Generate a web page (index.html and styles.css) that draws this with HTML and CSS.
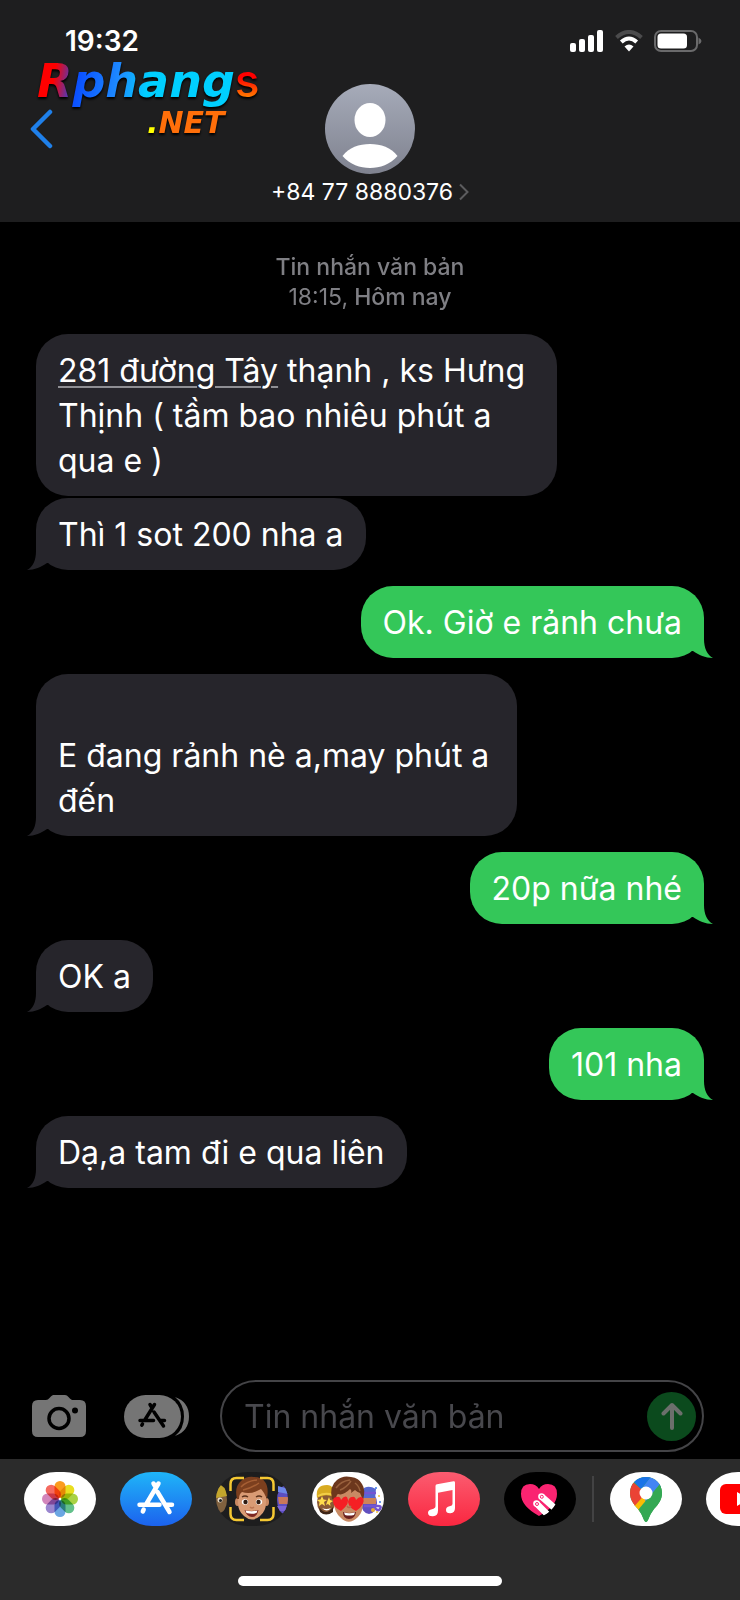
FILE: index.html
```html
<!DOCTYPE html>
<html lang="vi">
  <head>
    <meta charset="UTF-8" />
    <meta name="viewport" content="width=device-width, initial-scale=1.0" />
    <title>+84 77 8880376</title>
    <link rel="stylesheet" href="styles.css">
  </head>
  <body>
    <header class="header">
      <div class="status-bar">
        <span class="time">19:32</span>
        <div class="status-icons">
          <svg width="34" height="22" viewBox="0 0 34 22" fill="#fff">
            <rect x="0" y="13" width="6" height="9" rx="2" />
            <rect x="9" y="9" width="6" height="13" rx="2" />
            <rect x="18" y="5" width="6" height="17" rx="2" />
            <rect x="27" y="0" width="6" height="22" rx="2" />
          </svg>
          <svg width="28" height="22" viewBox="0 0 28 22" fill="none">
            <path d="M1.5 7.5Q14-3.5 26.5 7.5" stroke="#4b4b4c" stroke-width="4" />
            <path d="M6.3 12Q14 5 21.7 12" stroke="#fff" stroke-width="4" />
            <path d="M9.5 16.5Q14 12.500 18.500 16.500L14 21.500Z" fill="#fff" />
          </svg>
          <svg width="48" height="22" viewBox="0 0 48 22" fill="none">
            <rect x="1" y="1" width="42" height="20" rx="6" stroke="#6a6a6b" stroke-width="2" />
            <rect x="3.500" y="3.500" width="29.500" height="15" rx="3.500" fill="#fff" />
            <path d="M44.500 7.500Q47.500 9 47.500 11T44.500 14.500Z" fill="#6a6a6b" />
          </svg>
        </div>
      </div>
      <nav class="nav">
        <button class="back" aria-label="Quay lại">
          <svg width="24" height="40" viewBox="0 0 24 40" fill="none" stroke="#1f80ea" stroke-width="4.500" stroke-linecap="round" stroke-linejoin="round">
            <path d="M20 3L3 20L20 37" />
          </svg>
        </button>
        <a class="contact" href="#">
          <svg class="avatar" viewBox="0 0 90 90">
            <defs>
              <linearGradient id="avatar-bg" x1="0" y1="0" x2="0" y2="1">
                <stop offset="0" stop-color="#a6abb9" />
                <stop offset="1" stop-color="#7f828f" />
              </linearGradient>
            </defs>
            <circle cx="45" cy="45" r="45" fill="url(#avatar-bg)" />
            <ellipse cx="45" cy="36" rx="15.500" ry="17" fill="#fff" />
            <path d="M17.500 72C24 63.500 34 60 45 60S66 63.500 72.500 72C65 80.500 55 84 45 84S25 80.500 17.500 72Z" fill="#fff" />
          </svg>
          <span class="number">+84 77 8880376
            <svg width="10" height="18" viewBox="0 0 10 18" fill="none" stroke="#5c5c5e" stroke-width="2">
              <path d="M1 1.500L8.500 9L1 16.500" />
            </svg>
          </span>
        </a>
      </nav>
      <div class="logo">
        <div class="logo-top"><span class="logo-name">Rphang</span><span class="logo-s">s</span></div>
        <div class="logo-net"><span class="logo-dot">.</span>NET</div>
      </div>
    </header>

    <main class="messages">
      <div class="stamp">Tin nhắn văn bản<br><time>18:15,</time> Hôm nay</div>
      <div class="message"><a href="#">281 đường Tây</a> thạnh , ks Hưng Thịnh ( tầm bao nhiêu phút a qua e )</div>
      <div class="message tail follow">Thì 1 sot 200 nha a</div>
      <div class="message tail user">Ok. Giờ e rảnh chưa</div>
      <div class="message tail narrow"><br>E đang rảnh nè a,may phút a đến</div>
      <div class="message tail user">20p nữa nhé</div>
      <div class="message tail">OK a</div>
      <div class="message tail user">101 nha</div>
      <div class="message tail">Dạ,a tam đi e qua liên</div>
    </main>

    <form class="input-area">
      <button type="button" aria-label="Máy ảnh">
        <svg width="54" height="42" viewBox="0 0 54 42">
          <path d="M6 5H14Q16 5 17.500 3T21 0H33Q35 0 36.500 2T40 5H48Q54 5 54 11V36Q54 42 48 42H6Q0 42 0 36V11Q0 5 6 5Z" fill="#757575" />
          <circle cx="27" cy="23.500" r="10" fill="none" stroke="#000" stroke-width="3.500" />
          <circle cx="43" cy="15.500" r="3" fill="#000" />
        </svg>
      </button>
      <button type="button" aria-label="Ứng dụng">
        <svg width="66" height="43" viewBox="0 0 66 43">
          <path d="M51 2Q65 7 65 21.500T51 41Q60 34 60 21.500T51 2Z" fill="#757575" />
          <rect x="0" y="0" width="57" height="43" rx="21.500" fill="#757575" />
          <g stroke="#000" stroke-width="3.500" stroke-linecap="round" fill="none">
            <path d="M30.500 9.500L20.500 25.500M18.500 29L17.800 30.200M26 9.500L27.500 12M30 17L39.500 31M16 25.500H29.500M36.500 25.500H40.500" />
          </g>
        </svg>
      </button>
      <div class="field">
        <input type="text" placeholder="Tin nhắn văn bản" aria-label="Tin nhắn văn bản" />
        <button class="send" aria-label="Gửi">
          <svg width="22" height="28" viewBox="0 0 22 28" fill="none" stroke="#6c6f6c" stroke-width="4" stroke-linecap="round" stroke-linejoin="round">
            <path d="M11 26V3M2.500 11.500L11 3L19.500 11.500" />
          </svg>
        </button>
      </div>
    </form>

    <footer class="tray">
      <div class="apps">
        <button class="app" aria-label="Ảnh">
          <svg viewBox="0 0 72 54">
            <rect width="72" height="54" fill="#fff" />
            <g class="petals" transform="translate(36 27)">
              <rect x="-5.500" y="-18" width="11" height="17" rx="5.500" fill="#fb9c1e" />
              <rect x="-5.500" y="-18" width="11" height="17" rx="5.500" fill="#e9de20" transform="rotate(45)" />
              <rect x="-5.500" y="-18" width="11" height="17" rx="5.500" fill="#a9d244" transform="rotate(90)" />
              <rect x="-5.500" y="-18" width="11" height="17" rx="5.500" fill="#63c08b" transform="rotate(135)" />
              <rect x="-5.500" y="-18" width="11" height="17" rx="5.500" fill="#6ba6e2" transform="rotate(180)" />
              <rect x="-5.500" y="-18" width="11" height="17" rx="5.500" fill="#9a86cf" transform="rotate(225)" />
              <rect x="-5.500" y="-18" width="11" height="17" rx="5.500" fill="#d286bb" transform="rotate(270)" />
              <rect x="-5.500" y="-18" width="11" height="17" rx="5.500" fill="#f56a60" transform="rotate(315)" />
              <circle r="1.200" fill="#fff" />
            </g>
          </svg>
        </button>
        <button class="app" aria-label="App Store">
          <svg viewBox="0 0 72 54">
            <defs>
              <linearGradient id="store-bg" x1="0" y1="0" x2="0" y2="1">
                <stop offset="0" stop-color="#1fb5f8" />
                <stop offset="1" stop-color="#1c62ee" />
              </linearGradient>
            </defs>
            <rect width="72" height="54" fill="url(#store-bg)" />
            <path d="M38.500 11.500L26 32.500M23.700 37.500L22.800 39.500M33.500 11.500L35 14M37.500 20L49.500 40M19.500 32.800H39.500M47 32.800H52" stroke="#fff" stroke-width="4.500" stroke-linecap="round" fill="none" />
          </svg>
        </button>
        <button class="app" aria-label="Memoji">
          <svg viewBox="0 0 72 54">
            <rect width="72" height="54" fill="#1d1d1e" />
            <!-- left and right heads, cut off by the pill -->
            <ellipse cx="3" cy="28" rx="8" ry="13" fill="#80613f" />
            <path d="M0 13Q9 11 11 24L0 26Z" fill="#c3a62c" />
            <circle cx="4" cy="28" r="2.500" fill="#e9dfcd" />
            <circle cx="4.500" cy="28.500" r="1.500" fill="#222" />
            <ellipse cx="69" cy="28" rx="8" ry="14" fill="#5c4ec0" />
            <path d="M62 25H72V32H63Z" fill="#c9785a" />
            <path d="M62 14L72 17V22L62 20Z" fill="#6d87e6" />
            <path d="M61 34H72V39H64Z" fill="#7c64d8" />
            <!-- face -->
            <ellipse cx="21.500" cy="30" rx="2.500" ry="4" fill="#c98862" />
            <ellipse cx="50.500" cy="30" rx="2.500" ry="4" fill="#c98862" />
            <path d="M22 20Q22 13 36 13T50 20V31Q50 39 44 44Q36 51 28 44Q22 39 22 31Z" fill="#d99b74" />
            <path d="M21 27Q18 15 25 9Q30 4 38 5Q46 5 49 10Q53 15 51 27L48 21Q46 18 45 17Q35 23 26 20Q23 22 23 27Z" fill="#7c3f1e" />
            <path d="M25 15Q31 9 41 8M27 18Q36 16 43 11" stroke="#a65f34" stroke-width="1.500" fill="none" />
            <path d="M26 25Q29 23 32 25M40 25Q43 23 46 25" stroke="#59301a" stroke-width="1.500" fill="none" />
            <ellipse cx="29" cy="30" rx="3.200" ry="2.700" fill="#fff" />
            <ellipse cx="43" cy="30" rx="3.200" ry="2.700" fill="#fff" />
            <circle cx="29.500" cy="30" r="2.200" fill="#2e1b12" />
            <circle cx="42.500" cy="30" r="2.200" fill="#2e1b12" />
            <path d="M34 35Q36 37 38 35" stroke="#bb7551" stroke-width="1.500" fill="none" />
            <path d="M28.500 38Q36 40 42.500 38Q41 45 36 45T28.500 38Z" fill="#7c2622" />
            <path d="M29.500 38.400Q36 40 41.500 38.400L40.500 41Q36 42.500 30.500 41Z" fill="#fff" />
            <path d="M14.500 19V12Q14.500 6 20.500 6H28M44 6H51.500Q57.500 6 57.500 12V19M14.500 35V42Q14.500 48 20.500 48H28M44 48H51.500Q57.500 48 57.500 42V35" stroke="#f5c832" stroke-width="2.500" fill="none" />
          </svg>
        </button>
        <button class="app" aria-label="Nhãn dán Memoji">
          <svg viewBox="0 0 72 54">
            <rect width="72" height="54" fill="#fff" />
            <!-- bearded head with star eyes -->
            <ellipse cx="14" cy="30" rx="9" ry="12" fill="#8b5a35" />
            <path d="M5 26Q3 13 15 13Q23 13 22 25Q13 21 5 26Z" fill="#d8ab21" />
            <path d="M6 24Q13 20 21 23" stroke="#f2ce47" stroke-width="2" fill="none" />
            <path d="M10 24L11.500 27.500L15 28L12 30L13 34L10 32L7 34L7.500 30L5 28L8.500 27.500Z" fill="#ffdd4d" />
            <path d="M17 25L18 28L21 29L18 31L18.500 34L16 32L14 33L15 30Z" fill="#ffdd4d" />
            <path d="M7 35Q14 45 21 35V40Q14 45 8 40Z" fill="#3e2618" />
            <path d="M10 36Q14 38 19 36Q15 41 10 36Z" fill="#fff" />
            <!-- party head -->
            <ellipse cx="57" cy="31" rx="8" ry="11" fill="#6150bf" />
            <path d="M50 18Q55 12 64 17L63 26H51Z" fill="#5768d0" />
            <path d="M51 26H64V32H51Z" fill="#cf8458" />
            <path d="M51 21H64M52 34H66Q70 34 68 37T62 35" stroke="#7455d1" stroke-width="2.500" fill="none" />
            <circle cx="61" cy="38" r="2" fill="#e9ad31" />
            <circle cx="64" cy="16" r="1" fill="#3978e8" />
            <circle cx="67" cy="24" r="1" fill="#f1c53a" />
            <circle cx="65" cy="40" r="1" fill="#f1c53a" />
            <circle cx="68" cy="30" r="1" fill="#3978e8" />
            <!-- heart eyes -->
            <path d="M22 18Q24 12 36 12T51 20V31Q51 40 46 45Q37 54 29 46Q22 40 22 31Z" fill="#c98a63" />
            <path d="M20 27Q17 14 25 8Q31 3 39 5Q47 6 50 12Q54 18 51 28L48 21Q45 20 43 18L39 21Q40 18 38 17Q31 24 26 22Q24 23 24 28Z" fill="#6c371d" />
            <path d="M24 16Q29 9 38 8M28 18Q34 16 39 9M43 11Q47 14 48 19" stroke="#98603c" stroke-width="1.500" fill="none" />
            <path d="M29 39Q21 35 21 29Q21 25 25 25Q28 24 29 28Q32 23 35 25Q39 31 29 39Z" fill="#f51f24" />
            <path d="M44 39Q37 36 36 30Q37 25 40 25Q43 24 44 28Q48 23 51 26Q54 32 44 39Z" fill="#f51f24" />
            <path d="M35 34Q37 37 39 34" stroke="#b36f4c" stroke-width="1.500" fill="none" />
            <path d="M31 40Q37 42 44 40Q43 47 37 47T31 40Z" fill="#6b201f" />
            <path d="M32 40.500Q37 42 43 40.500L42 43Q37 44 33 43Z" fill="#fff" />
          </svg>
        </button>
        <button class="app" aria-label="Nhạc">
          <svg viewBox="0 0 72 54">
            <defs>
              <linearGradient id="music-bg" x1="0" y1="0" x2="0" y2="1">
                <stop offset="0" stop-color="#fb5c70" />
                <stop offset="1" stop-color="#fa2740" />
              </linearGradient>
            </defs>
            <rect width="72" height="54" fill="url(#music-bg)" />
            <path d="M27.500 14Q27.500 12.500 29 12.200L45.500 9.200Q47 9 47 10.500V36Q47 41 42.500 41.300Q38 41.500 38 38Q38 35 41.500 34.300Q44.500 33.800 44.500 32V18L30 20.700V38.500Q30 44 25 44.300Q20 44.500 20 40.800Q20 37.800 24 37.200Q27.500 36.600 27.500 34Z" fill="#fff" />
          </svg>
        </button>
        <button class="app" aria-label="Digital Touch">
          <svg viewBox="0 0 72 54">
            <rect width="72" height="54" fill="#000" />
            <path d="M35 44Q17 34 17 22Q17 12 26 12Q32 12 35 17Q38 12 44 12Q53 12 53 22Q53 34 35 44Z" fill="#fa2471" />
            <path d="M37.500 24.500L50 35.500M32.500 31.500L43 42" stroke="#fff" stroke-width="6.500" />
            <circle cx="37.500" cy="24.500" r="3.300" fill="#fff" />
            <circle cx="32.500" cy="31.500" r="3.300" fill="#fff" />
            <circle cx="37.800" cy="24.800" r="1.500" fill="none" stroke="#fa2471" />
            <circle cx="33" cy="32" r="1.500" fill="none" stroke="#fa2471" />
            <path d="M53 29V46H35L44 41Q51 35 53 29Z" fill="#000" />
          </svg>
        </button>
        <span class="divider"></span>
        <button class="app" aria-label="Google Maps">
          <svg viewBox="0 0 72 54">
            <defs>
              <clipPath id="pin">
                <path d="M36 5C26.500 5 20 12 20 21C20 28 23.500 32 28 37Q32 42 34 48Q36 52 38 48Q40 42 44 37C48.500 32 52 28 52 21C52 12 45.500 5 36 5Z" />
              </clipPath>
            </defs>
            <rect width="72" height="54" fill="#fff" />
            <g clip-path="url(#pin)">
              <rect x="18" y="3" width="36" height="50" fill="#34a853" />
              <path d="M18 38L40 12L44 24L28 41Z" fill="#fbbc04" />
              <path d="M18 6L36 21L22 37L16 30Z" fill="#ea4335" />
              <path d="M30 3H56V9L36 31L32 16L42 3Z" fill="#4285f4" />
              <path d="M22 8L28 2H43L31 17Z" fill="#1a73e8" />
              <path d="M54 7L28 38L34 52L56 40Z" fill="#34a853" />
            </g>
            <circle cx="36" cy="21" r="6.500" fill="#fff" />
          </svg>
        </button>
        <button class="app" aria-label="YouTube">
          <svg viewBox="0 0 72 54">
            <rect width="72" height="54" fill="#fff" />
            <rect x="14" y="12" width="44" height="30" rx="6" fill="#f00" />
            <path d="M31 20L43 27L31 34Z" fill="#fff" />
          </svg>
        </button>
      </div>
      <div class="home-bar"></div>
    </footer>
  </body>
</html>
```
FILE: styles.css
```css
* {
  margin: 0;
  padding: 0;
  box-sizing: border-box;
}
body {
  min-height: 100vh;
  display: flex;
  flex-direction: column;
  font-family: Inter, "Liberation Sans", sans-serif;
  background: #000;
  color: #fff;
  overflow-x: hidden;
}
button {
  border: none;
  background: none;
  cursor: pointer;
}
a {
  color: inherit;
}
svg {
  display: block;
}

/* header */
.header {
  position: relative;
  background: #1e1e1f;
  padding-bottom: 15px;
}
.status-bar {
  display: flex;
  justify-content: space-between;
  align-items: center;
  height: 84px;
  padding: 0 38px 2px 65px;
}
.time {
  font-size: 28px;
  font-weight: 600;
}
.status-icons {
  display: flex;
  gap: 11px;
}
.nav {
  display: grid;
  grid-template-columns: 1fr auto 1fr;
  align-items: start;
}
.back {
  justify-self: start;
  padding: 25px 30px;
}
.contact {
  display: flex;
  flex-direction: column;
  align-items: center;
  gap: 3px;
  text-decoration: none;
}
.avatar {
  width: 90px;
  height: 90px;
}
.number {
  display: flex;
  align-items: center;
  gap: 6px;
  font-size: 23px;
  line-height: 30px;
}
.logo {
  position: absolute;
  top: 54px;
  left: 37px;
  font-family: "DejaVu Sans", sans-serif;
  font-weight: bold;
  font-style: italic;
  filter: drop-shadow(0 2px 1px #000);
}
.logo-top {
  font-size: 46px;
  line-height: 52px;
}
.logo-name {
  background: linear-gradient(100deg, #f00 10%, #0a50ff 22%, #1e8cff 42%, #00cfff 56%);
  -webkit-background-clip: text;
  background-clip: text;
  color: transparent;
}
.logo-s {
  font-family: Inter, sans-serif;
  font-weight: 500;
  font-style: normal;
  background: linear-gradient(#f00 45%, #ff7a00 80%);
  -webkit-background-clip: text;
  background-clip: text;
  color: transparent;
}
.logo-net {
  padding-left: 110px;
  font-size: 30px;
  line-height: 32px;
  color: #ff6f0a;
}
.logo-dot {
  color: #ff0;
}

/* conversation */
.messages {
  flex: 1;
  display: flex;
  flex-direction: column;
  align-items: flex-start;
  gap: 16px;
  padding: 30px 36px 16px;
}
.stamp {
  align-self: center;
  margin-bottom: 6px;
  font-size: 23px;
  font-weight: 500;
  line-height: 30px;
  text-align: center;
  color: #7f7f84;
}
.stamp time {
  font-weight: 400;
}
.message {
  position: relative;
  max-width: 78%;
  padding: 14px 22px 13px;
  border-radius: 32px;
  background: #26252b;
  font-size: 32px;
  line-height: 45px;
}
.message a {
  text-decoration-color: #8f8f94;
  text-decoration-thickness: 2px;
  text-underline-offset: 4px;
}
.message.follow {
  margin-top: -14px;
}
.message.narrow {
  max-width: 72%;
}
.message.user {
  align-self: flex-end;
  background: #34c759;
}
.tail::after {
  content: '';
  position: absolute;
  left: -9px;
  bottom: 0;
  width: 30px;
  height: 32px;
  background: inherit;
  clip-path: path("M9 0V13C9 22 6 29 0 32C8 32 14 29 20 25L30 25V0Z");
}
.tail.user::after {
  left: auto;
  right: -9px;
  transform: scaleX(-1);
}

/* composer */
.input-area {
  display: flex;
  align-items: center;
  padding: 0 36px 7px 32px;
  gap: 38px;
}
.field {
  flex: 1;
  min-width: 0;
  display: flex;
  align-items: center;
  height: 72px;
  margin-left: -8px;
  padding: 0 6px 0 22px;
  border: 2px solid #444447;
  border-radius: 36px;
}
.field input {
  flex: 1;
  min-width: 0;
  border: none;
  outline: none;
  background: none;
  color: #fff;
  font-family: inherit;
  font-size: 32px;
}
.field input::placeholder {
  color: #48484d;
  opacity: 1;
}
.send {
  display: grid;
  place-items: center;
  width: 49px;
  height: 49px;
  border-radius: 50%;
  background: #0b4a1d;
}

/* app tray */
.tray {
  background: #2b2b2b;
  padding: 13px 0 14px;
}
.apps {
  display: flex;
  align-items: center;
  gap: 24px;
  padding-left: 24px;
  overflow: hidden;
}
.app {
  flex: none;
  width: 72px;
  height: 54px;
  border-radius: 32px / 27px;
  overflow: hidden;
}
.petals rect {
  mix-blend-mode: multiply;
}
.divider {
  flex: none;
  width: 2px;
  height: 46px;
  margin: 0 -8px;
  background: #434344;
}
.home-bar {
  width: 264px;
  height: 10px;
  margin: 50px auto 0;
  border-radius: 5px;
  background: #fff;
}
```
